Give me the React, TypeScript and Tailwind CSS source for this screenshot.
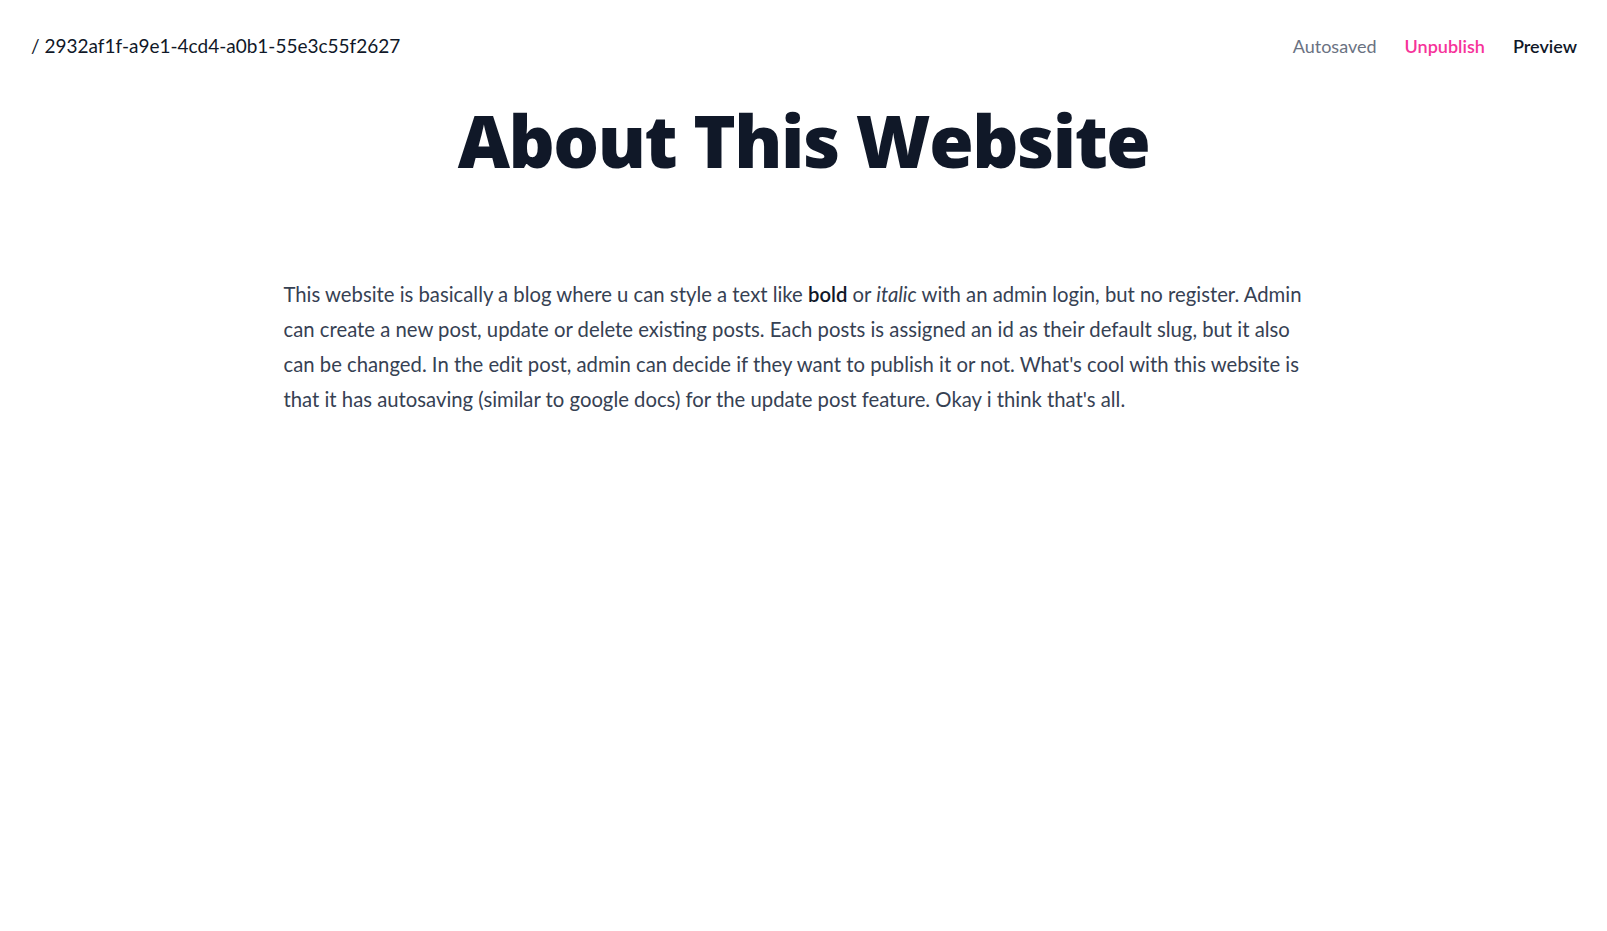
export default function App() {
  return (
    <div className="min-h-screen bg-white font-['Segoe_UI','Lato',sans-serif] text-gray-900">
      {/* --- top bar --- */}
      <header className="flex items-center justify-between pl-[31px] pr-[30px] pt-[32px]">
        <span className="text-[19px] leading-[28px] text-gray-900">/ 2932af1f-a9e1-4cd4-a0b1-55e3c55f2627</span>
        <nav className="flex items-center gap-[28px] text-[18px] leading-[28px]">
          <span className="text-gray-500">Autosaved</span>
          <button className="font-semibold text-pink-500">Unpublish</button>
          <button className="font-semibold text-gray-900">Preview</button>
        </nav>
      </header>

      {/* --- post --- */}
      <main className="mx-auto mt-[41px] max-w-[1040px]">
        <h1 className="text-center font-['Segoe_UI','Open_Sans',sans-serif] text-[72px] font-extrabold leading-[1.1] tracking-[-1.5px] text-gray-900">About This Website</h1>
        <p className="mt-[97px] pr-[12px] text-[20.3px] leading-[35px] text-gray-700">
          This website is basically a blog where u can style a text like <strong className="font-semibold text-gray-900">bold</strong> or <em>italic</em> with an admin login, but no register. Admin can create a new post, update or delete existing posts. Each posts is assigned an id as their default slug, but it also can be changed. In the edit post, admin can decide if they want to publish it or not. What's cool with this website is that it has autosaving (similar to google docs) for the update post feature. Okay i think that's all.
        </p>
      </main>
    </div>
  );
}
